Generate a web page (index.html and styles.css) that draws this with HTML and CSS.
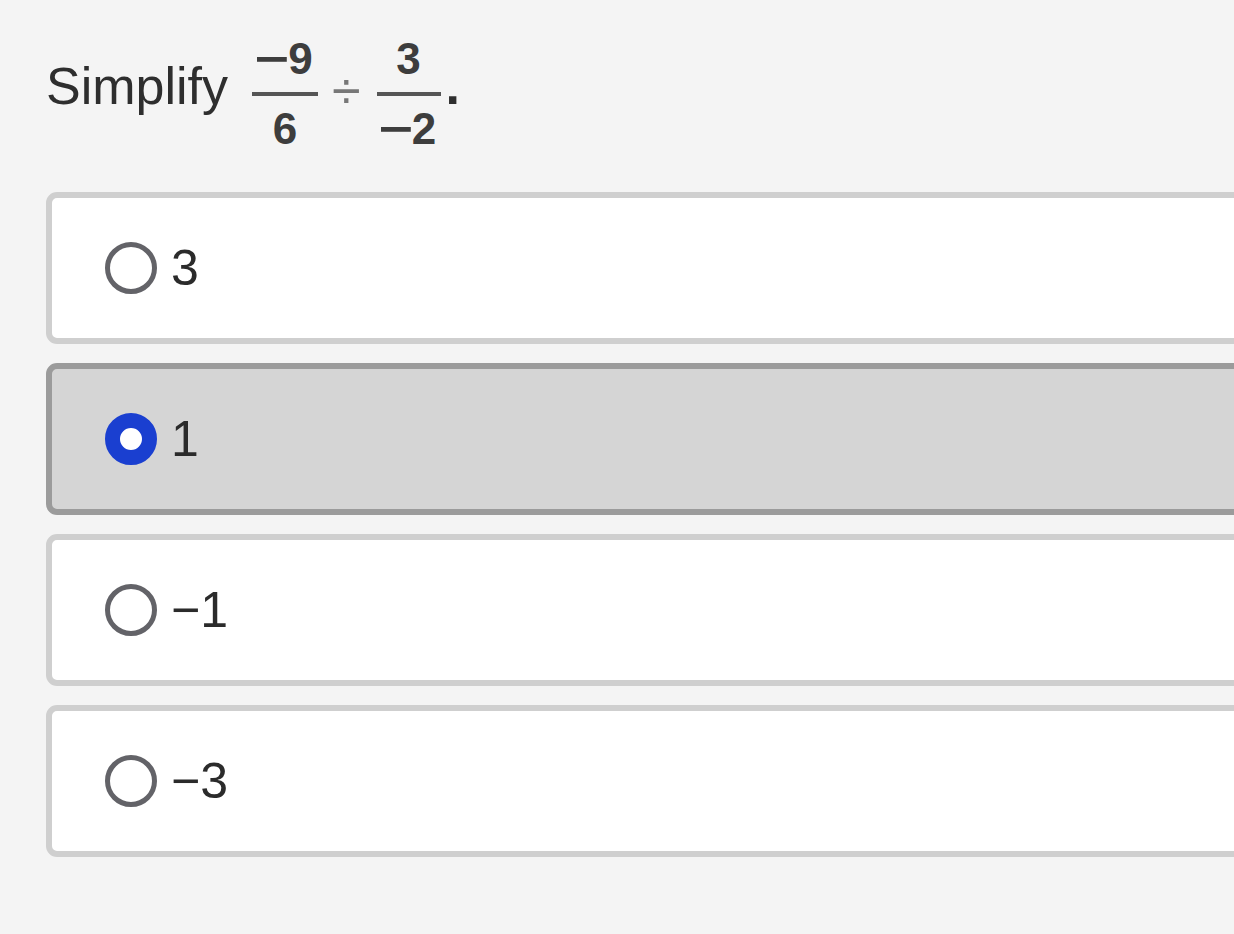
FILE: index.html
```html
<!DOCTYPE html>
<html>
<head>
<meta charset="utf-8">
<link rel="stylesheet" href="styles.css">
</head>
<body>
<div class="page">
  <div class="question">
    <span class="word">Simplify</span>
    <span class="frac frac-a"><span class="num"><span class="minus">−</span>9</span><span class="bar"></span><span class="den">6</span></span>
    <span class="op">÷</span>
    <span class="frac frac-b"><span class="num">3</span><span class="bar"></span><span class="den"><span class="minus">−</span>2</span></span>
    <span class="dot">.</span>
  </div>
  <div class="options">
    <label class="card"><span class="radio"></span><span class="val">3</span></label>
    <label class="card selected"><span class="radio"></span><span class="val">1</span></label>
    <label class="card"><span class="radio"></span><span class="val">−1</span></label>
    <label class="card"><span class="radio"></span><span class="val">−3</span></label>
  </div>
</div>
</body>
</html>
```
FILE: styles.css
```css
html, body {
  margin: 0;
  padding: 0;
  background: #f4f4f4;
  overflow: hidden;
  width: 1234px;
  height: 934px;
}
.page {
  padding: 35px 0 0 46px;
  font-family: "Liberation Sans", Arial, sans-serif;
  color: #2e2e2e;
}
.question {
  display: flex;
  align-items: flex-start;
  height: 113px;
}
.word {
  font-size: 52px;
  line-height: 52px;
  margin-top: 25px;
}
.frac {
  display: flex;
  flex-direction: column;
  align-items: center;
  font-size: 44px;
  line-height: 44px;
  font-weight: bold;
  color: #3d3d3d;
}
.frac-a { width: 66px; margin-left: 24px; }
.frac-b { width: 64px; }
.frac .num, .frac .den {
  display: block;
  white-space: nowrap;
}
.frac .num { margin-top: 2px; }
.frac .bar {
  display: block;
  height: 4px;
  width: 100%;
  background: #555;
  margin: 11px 0 11px;
}
.minus {
  display: inline-block;
  transform: scaleX(1.35);
  margin: 0 3px 0 2px;
}
.op {
  font-size: 52px;
  line-height: 52px;
  color: #777;
  margin: 30px 16px 0 14px;
}
.dot {
  font-size: 52px;
  line-height: 52px;
  font-weight: bold;
  margin: 25px 0 0 5px;
}
.options {
  margin-top: 44px;
  display: flex;
  flex-direction: column;
  gap: 19px;
}
.card {
  box-sizing: border-box;
  width: 1400px;
  height: 152px;
  border: 6px solid #cfcfcf;
  border-radius: 11px;
  background: #ffffff;
  display: flex;
  align-items: center;
  padding-left: 53px;
  font-size: 50px;
}
.card.selected {
  background: #d5d5d5;
  border-color: #9b9b9b;
}
.radio {
  box-sizing: border-box;
  width: 52px;
  height: 52px;
  border-radius: 50%;
  border: 5px solid #636368;
  background: #fff;
  margin-right: 14px;
  flex: none;
}
.selected .radio {
  border: 15px solid #1a3fd0;
  background: #fff;
}
.val {
  color: #2b2b2b;
}
```
